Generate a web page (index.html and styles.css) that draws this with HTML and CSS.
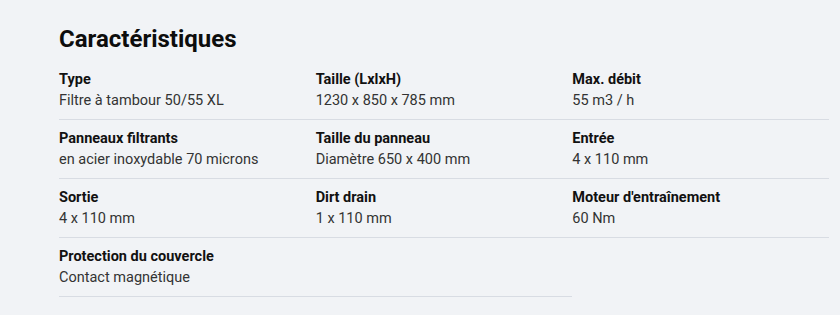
FILE: index.html
```html
<!DOCTYPE html>
<html lang="fr">
<head>
<meta charset="utf-8">
<title>Caractéristiques</title>
<link rel="stylesheet" href="styles.css">
</head>
<body>
<section class="specs">
  <h2 class="specs-title">Caractéristiques</h2>
  <div class="specs-grid">
    <div class="spec"><div class="spec-label">Type</div><div class="spec-value">Filtre à tambour 50/55 XL</div></div>
    <div class="spec"><div class="spec-label">Taille (LxlxH)</div><div class="spec-value">1230 x 850 x 785 mm</div></div>
    <div class="spec"><div class="spec-label">Max. débit</div><div class="spec-value">55 m3 / h</div></div>
    <div class="spec"><div class="spec-label">Panneaux filtrants</div><div class="spec-value">en acier inoxydable 70 microns</div></div>
    <div class="spec"><div class="spec-label">Taille du panneau</div><div class="spec-value">Diamètre 650 x 400 mm</div></div>
    <div class="spec"><div class="spec-label">Entrée</div><div class="spec-value">4 x 110 mm</div></div>
    <div class="spec"><div class="spec-label">Sortie</div><div class="spec-value">4 x 110 mm</div></div>
    <div class="spec"><div class="spec-label">Dirt drain</div><div class="spec-value">1 x 110 mm</div></div>
    <div class="spec"><div class="spec-label">Moteur d'entraînement</div><div class="spec-value">60 Nm</div></div>
    <div class="spec"><div class="spec-label">Protection du couvercle</div><div class="spec-value">Contact magnétique</div></div>
    <div class="spec spec-empty"></div>
  </div>
</section>
</body>
</html>
```

FILE: styles.css
```css
html, body {
  margin: 0;
  padding: 0;
  background: #f1f3f6;
}
body {
  font-family: Roboto, "Liberation Sans", Arial, sans-serif;
  color: #222;
}
.specs {
  width: 770px;
  padding: 24px 0 0 59px;
}
.specs-title {
  margin: 0 0 7px;
  font-size: 24px;
  line-height: 30px;
  font-weight: 700;
  color: #0d0d0d;
}
.specs-grid {
  display: grid;
  grid-template-columns: repeat(3, 1fr);
}
.spec {
  padding: 8px 0 8px;
  border-bottom: 1px solid #d8dce3;
  height: 42px;
}
.spec-label {
  font-size: 14.5px;
  line-height: 22px;
  font-weight: 700;
  color: #111;
}
.spec-value {
  font-size: 14.5px;
  line-height: 20px;
  color: #333;
}
```
